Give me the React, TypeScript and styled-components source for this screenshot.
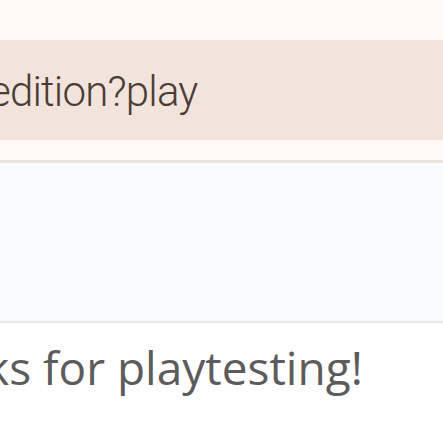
import React from "react";
import styled, { createGlobalStyle } from "styled-components";

const Global = createGlobalStyle`
  html, body { margin: 0; padding: 0; background: #ffffff; overflow: hidden; }
  #root { width: 443px; height: 443px; overflow: hidden; }
`;

const Page = styled.div`
  display: flex;
  flex-direction: column;
  width: 443px;
  height: 443px;
  overflow: hidden;
`;

const Header = styled.header`
  background: #fffaf5;
  padding: 40px 0 20px;
  border-bottom: 3px solid #ece4dc;
  display: flex;
  flex-direction: column;
`;

const UrlBar = styled.div`
  height: 100px;
  background: #f2e4dc;
  display: flex;
  align-items: center;
  overflow: hidden;
  white-space: nowrap;
`;

const UrlText = styled.span`
  font-family: Roboto, "Liberation Sans", sans-serif;
  font-weight: 300;
  font-size: 42px;
  letter-spacing: -0.8px;
  color: #4a3d36;
  margin-left: -11px;
  padding-top: 2px;
`;

const Panel = styled.section`
  margin-top: 3px;
  height: 154px;
  background: #f9fafc;
  border-top: 1px solid #f3f6f8;
  border-bottom: 2px solid #e6e7ea;
`;

const Footer = styled.footer`
  flex: 1;
  background: #ffffff;
  display: flex;
  align-items: flex-start;
  overflow: hidden;
  white-space: nowrap;
  padding-top: 13px;
`;

const Thanks = styled.p`
  margin: 0 0 0 -15px;
  font-family: "Open Sans", "Noto Sans", sans-serif;
  font-size: 46px;
  color: #5c5c5c;
`;

export default function App() {
  return (
    <Page>
      <Global />
      <Header>
        <UrlBar>
          <UrlText>edition?play</UrlText>
        </UrlBar>
      </Header>
      <Panel />
      <Footer>
        <Thanks>ks for playtesting!</Thanks>
      </Footer>
    </Page>
  );
}
